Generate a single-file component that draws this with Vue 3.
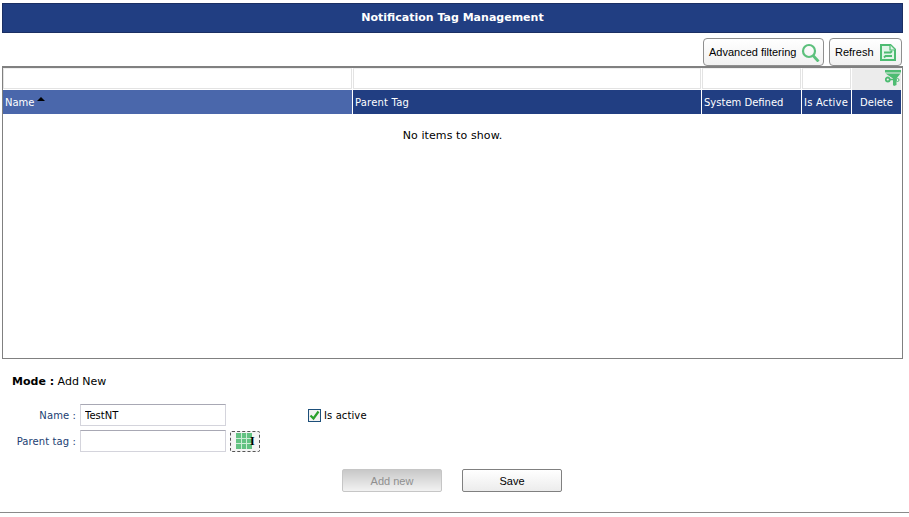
<script setup>
const columns = [
  { key: 'name', label: 'Name', width: 349, sorted: true },
  { key: 'parent', label: 'Parent Tag', width: 348, spaced: true },
  { key: 'system', label: 'System Defined', width: 99 },
  { key: 'active', label: 'Is Active', width: 49, spaced: true },
  { key: 'delete', label: 'Delete', width: 49, center: true }
]
</script>

<template>
  <main class="page">
    <h1 class="title">Notification Tag Management</h1>

    <div class="toolbar">
      <button class="tool-btn adv" type="button">
        <span>Advanced filtering</span>
        <svg width="19" height="19" viewBox="0 0 19 19" fill="none" stroke="#5cc07c" stroke-width="2.200">
          <circle cx="8" cy="8" r="6" />
          <path d="M12 12.500l5.500 6" stroke-width="2.800" />
        </svg>
      </button>
      <button class="tool-btn refresh" type="button">
        <span>Refresh</span>
        <svg width="16" height="17" viewBox="0 0 16 17" fill="#e2f5e8" stroke="#4ebc72" stroke-width="2">
          <path d="M1 1h9.500L15 5.500V16H1z" />
          <path d="M10 1v5h5" stroke-width="1.200" />
          <path d="M4 8.500h6.500L12 7M12 12H5.500L4 13.500" fill="none" stroke-width="1.800" />
        </svg>
      </button>
    </div>

    <section class="grid">
      <div class="filter-row">
        <div
          v-for="c in columns"
          :key="c.key"
          class="filter-cell"
          :class="{ 'filter-tool': c.key === 'delete' }"
          :style="{ width: c.width + 'px' }"
        >
          <svg v-if="c.key === 'delete'" width="16" height="17" viewBox="0 0 16 17" class="funnel">
            <path d="M0 1h16v2.500H0zM.500 4.500h15L11.500 9.500V16l-2.500 1-1-1V9.500z" fill="#4ebc72" />
            <circle cx="2.800" cy="10.500" r="2" fill="none" stroke="#4ebc72" stroke-width="1.800" />
            <path d="M4.500 10.500h3.500" stroke="#4ebc72" stroke-width="1.500" />
            <circle cx="12.500" cy="11" r="1.500" fill="none" stroke="#4ebc72" stroke-width="1" />
          </svg>
        </div>
      </div>
      <div class="head-row">
        <div
          v-for="c in columns"
          :key="c.key"
          class="head-cell"
          :class="{ sorted: c.sorted, center: c.center, spaced: c.spaced }"
          :style="{ width: c.width + 'px' }"
        >
          {{ c.label }}<span v-if="c.sorted" class="caret"></span>
        </div>
      </div>
      <p class="empty">No items to show.</p>
    </section>

    <p class="mode"><b>Mode :</b> Add New</p>

    <form class="form" @submit.prevent>
      <div class="fields">
        <div class="field">
          <label class="lbl">Name :</label>
          <input class="txt" type="text" value="TestNT" />
          <label class="check">
            <span class="box">
              <svg width="11" height="11" viewBox="0 0 11 11" fill="none" stroke="#2aa02a" stroke-width="2.200">
                <path d="M1.500 5.500l3 3 5-7" />
              </svg>
            </span>
            Is active
          </label>
        </div>
        <div class="field">
          <label class="lbl">Parent tag :</label>
          <input class="txt" type="text" />
          <button class="pick" type="button">
            <svg width="16" height="16" viewBox="0 0 16 16">
              <path d="M0 0h16v16H0z" fill="#62c282" />
              <path d="M5.500 0v16M10.500 0v16M0 5.500h16M0 10.500h16" stroke="#cdeed7" stroke-width="1" />
            </svg>
            <span class="cursor">I</span>
          </button>
        </div>
      </div>
      <div class="actions">
        <button class="act disabled" type="button" disabled>Add new</button>
        <button class="act" type="button">Save</button>
      </div>
    </form>
  </main>
</template>

<style>
html, body { margin: 0; background: #fff; }
</style>

<style scoped>
.page {
  width: 909px;
  height: 517px;
  box-sizing: border-box;
  padding-top: 3px;
  font-family: "DejaVu Sans", Verdana, sans-serif;
  font-size: 10px;
  color: #000;
  position: relative;
  overflow: hidden;
}
.page::after {
  content: "";
  position: absolute;
  left: 0;
  right: 0;
  top: 512px;
  height: 1px;
  background: #8a8a8a;
}
.title {
  margin: 0 6px 0 2px;
  height: 30px;
  background: #213e82;
  border: 1px solid #1b2f63;
  box-sizing: border-box;
  color: #fff;
  font-size: 11px;
  font-weight: 700;
  line-height: 27px;
  text-align: center;
}
.toolbar {
  display: flex;
  justify-content: flex-end;
  gap: 5px;
  height: 33px;
  padding: 5px 7px 0 0;
  box-sizing: border-box;
}
.tool-btn {
  height: 28px;
  border: 1px solid #8f8f8f;
  border-radius: 4px;
  background: linear-gradient(#fff, #f1f1f1);
  font-family: "Liberation Sans", Arial, sans-serif;
  font-size: 11px;
  color: #000;
  display: flex;
  align-items: center;
  gap: 5px;
  padding: 0 0 0 5px;
  box-sizing: border-box;
  white-space: nowrap;
}
.adv { width: 121px; }
.refresh { width: 73px; gap: 6px; }
.grid {
  width: 901px;
  height: 293px;
  margin-left: 2px;
  box-sizing: border-box;
  border: 1px solid #808080;
  border-top-width: 2px;
}
.filter-row {
  display: flex;
  height: 22px;
  box-sizing: border-box;
}
.filter-cell {
  box-sizing: border-box;
  height: 21px;
  border: 1px solid #e3e3e3;
  border-top-color: #efefef;
  margin-right: 1px;
  position: relative;
}
.filter-tool {
  background: #ececec;
  border: 0;
  margin-right: 0;
  height: 22px;
}
.funnel { position: absolute; right: 0; top: 1px; }
.head-row {
  display: flex;
  height: 24px;
}
.head-cell {
  box-sizing: border-box;
  height: 24px;
  margin-right: 1px;
  padding-left: 2px;
  background: #213e82;
  color: #fff;
  font-size: 10px;
  line-height: 26px;
  white-space: nowrap;
  position: relative;
}
.head-cell:last-child { margin-right: 0; }
.head-cell.spaced { letter-spacing: 0.2px; }
.head-cell.center { text-align: center; padding-left: 0; }
.sorted { background: #4a67ab; }
.caret {
  position: absolute;
  left: 34px;
  top: 7px;
  border-left: 4px solid transparent;
  border-right: 4px solid transparent;
  border-bottom: 4px solid #000;
}
.empty {
  margin: 15px 0 0;
  text-align: center;
  font-size: 11px;
  line-height: 14px;
  letter-spacing: 0.1px;
}
.mode {
  margin: 15px 0 0 12px;
  font-size: 11px;
  line-height: 16px;
}
.mode b { font-weight: 700; }
.form { display: block; }
.fields {
  margin-top: 14px;
  display: flex;
  flex-direction: column;
  gap: 4px;
}
.field {
  display: flex;
  align-items: center;
  height: 22px;
}
.lbl {
  width: 76px;
  text-align: right;
  color: #213e72;
  font-size: 10px;
  letter-spacing: 0.1px;
  margin-right: 4px;
}
.txt {
  width: 146px;
  height: 22px;
  box-sizing: border-box;
  border: 1px solid #d4d4dc;
  border-top-color: #a8a8b4;
  padding: 0 4px;
  font-family: "DejaVu Sans", Verdana, sans-serif;
  font-size: 10px;
  color: #000;
  outline: 0;
}
.check {
  margin-left: 82px;
  display: flex;
  align-items: center;
  gap: 3px;
  font-size: 10px;
  letter-spacing: 0.1px;
}
.box {
  width: 13px;
  height: 13px;
  box-sizing: border-box;
  border: 1px solid #1d4f7a;
  display: flex;
  align-items: center;
  justify-content: center;
  background: #f2f2f2;
}
.pick {
  margin-left: 4px;
  width: 30px;
  height: 21px;
  box-sizing: border-box;
  border: 1px dashed #555;
  border-radius: 2px;
  background: #f4f4f4;
  padding: 0 0 0 5px;
  display: flex;
  align-items: center;
  position: relative;
}
.cursor {
  font-family: "Liberation Serif", serif;
  font-size: 12px;
  font-weight: 700;
  margin-left: -2px;
}
.actions {
  margin-top: 17px;
  display: flex;
  gap: 20px;
  padding-left: 342px;
}
.act {
  width: 100px;
  height: 23px;
  box-sizing: border-box;
  border: 1px solid #808080;
  border-radius: 2px;
  background: linear-gradient(#fff, #ececec);
  font-family: "Liberation Sans", Arial, sans-serif;
  font-size: 11px;
  color: #000;
  padding: 0;
}
.disabled {
  border-color: #c6c6c6;
  background: linear-gradient(#c8c8c8, #f2f2f2);
  color: #8f8f8f;
}
</style>
